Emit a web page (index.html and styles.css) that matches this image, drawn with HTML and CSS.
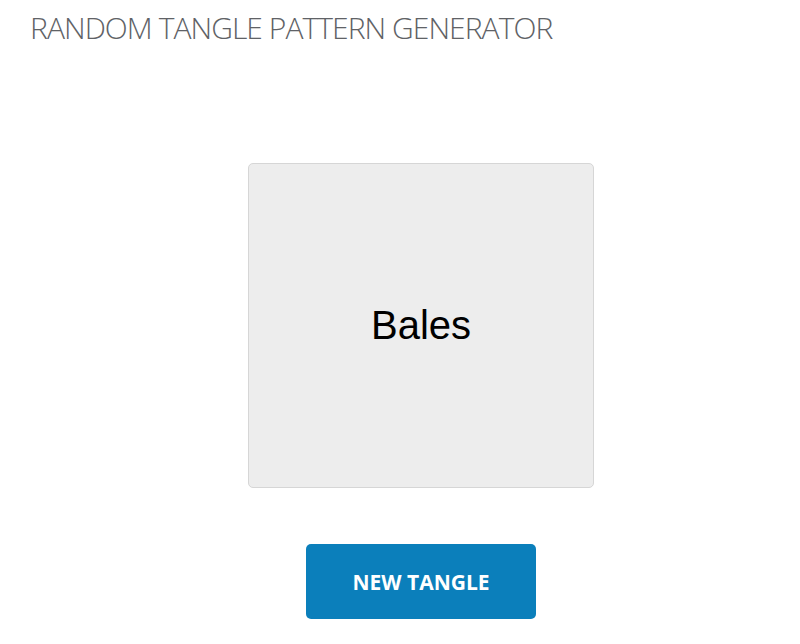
FILE: index.html
```html
<!DOCTYPE html>
<html>

<head>
    <title>Random Tangle Pattern Generator</title>
    <link rel="stylesheet" href="styles.css">
</head>

<body>
    <div class="page">
        <h1 class="title">RANDOM TANGLE PATTERN GENERATOR</h1>
        <div class="stage">
            <div class="tangle-box">
                <span id="tangle-name" class="tangle-name">Bales</span>
            </div>
            <button type="button" id="new-tangle" class="new-button">NEW TANGLE</button>
        </div>
    </div>
</body>

</html>
```

FILE: styles.css
```css
body {
    font-family: "Open Sans", Arial, sans-serif;
    background-color: #ffffff;
    margin: 0;
    padding: 0;
}

.page {
    padding: 0 30px;
}

.title {
    margin: 0;
    padding-top: 10px;
    font-size: 30px;
    font-weight: 300;
    color: #606266;
    line-height: 36px;
    letter-spacing: -0.95px;
}

.stage {
    display: flex;
    flex-direction: column;
    align-items: center;
    margin-left: 42px;
    padding-top: 117px;
}

.tangle-box {
    width: 344px;
    height: 323px;
    background-color: #ededed;
    border: 1px solid #d6d6d6;
    border-radius: 5px;
    display: flex;
    justify-content: center;
    align-items: center;
}

.tangle-name {
    font-family: "Liberation Sans", Arial, sans-serif;
    font-size: 40px;
    color: #000000;
}

.new-button {
    margin-top: 56px;
    width: 230px;
    height: 75px;
    background-color: #0b7fbb;
    color: #ffffff;
    font-family: "Open Sans", Arial, sans-serif;
    font-size: 21px;
    font-weight: 700;
    border: none;
    border-radius: 5px;
    cursor: pointer;
}
```
